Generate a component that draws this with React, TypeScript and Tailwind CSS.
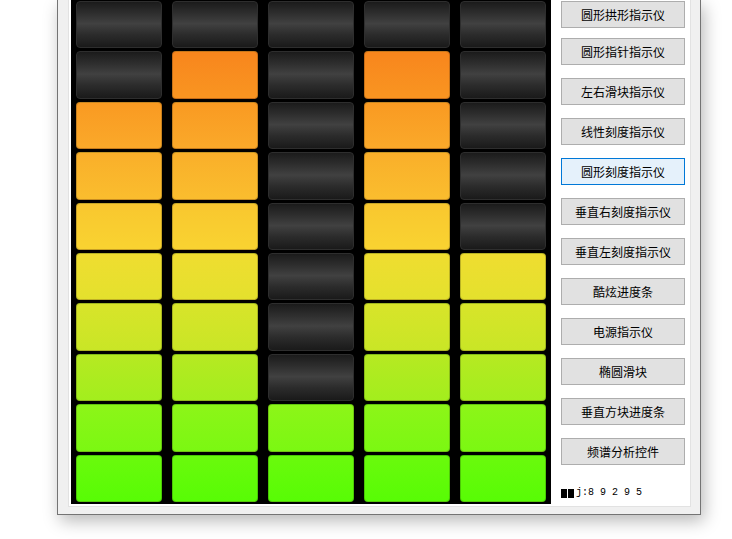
import React from 'react';

const rowColors: [string, string][] = [
  ['#f66f1a', '#f77e1c'],
  ['#f8861d', '#f99521'],
  ['#f99a22', '#faa92a'],
  ['#f9af2a', '#fabd2e'],
  ['#f9c72f', '#f9d331'],
  ['#efdd30', '#e4e12d'],
  ['#d8e42a', '#c9e626'],
  ['#b6e922', '#a3ee1d'],
  ['#8df518', '#7bf812'],
  ['#6afa0c', '#58fc05'],
];

const values = [8, 9, 2, 9, 5];

const buttons = [
  '圆形拱形指示仪',
  '圆形指针指示仪',
  '左右滑块指示仪',
  '线性刻度指示仪',
  '圆形刻度指示仪',
  '垂直右刻度指示仪',
  '垂直左刻度指示仪',
  '酷炫进度条',
  '电源指示仪',
  '椭圆滑块',
  '垂直方块进度条',
  '频谱分析控件',
];

function Cell({ row, lit }: { row: number; lit: boolean }) {
  if (!lit) {
    return (
      <div className="rounded-[4px] border border-[#2e2e2e] bg-[linear-gradient(to_bottom,#1b1b1b_0%,#2e2e2e_25%,#414141_48%,#2c2c2c_72%,#1a1a1a_100%)]" />
    );
  }
  const [top, bottom] = rowColors[row];
  return (
    <div
      className="rounded-[4px] border border-black/20"
      style={{ background: `linear-gradient(to bottom, ${top}, ${bottom})` }}
    />
  );
}

export default function App() {
  return (
    <div className="w-[732px] h-[539px] bg-white overflow-hidden" style={{ fontFamily: '"Noto Sans CJK SC", "Noto Sans", sans-serif' }}>
      <div className="ml-[57px] w-[644px] h-[515px] bg-[#f0f0f0] border-x border-b border-[#747474] px-[10px] pr-[9px] pb-[7px] shadow-[3px_6px_16px_rgba(0,0,0,0.28)]">
        <div className="h-full bg-white border-x border-b border-[#e2e2e2] pl-[2px] pb-[2px] flex">
          <div className="w-[480px] h-[504px] bg-black pl-[5px] pr-[5px] pt-[1px] pb-[2px] grid grid-cols-5 grid-rows-10 gap-x-[10px] gap-y-[3px]">
            {rowColors.map((_, r) =>
              values.map((v, c) => <Cell key={`${r}-${c}`} row={r} lit={10 - r <= v} />)
            )}
          </div>
          <div className="ml-[10px] flex flex-col">
            <div className="flex flex-col gap-[13px] pt-[1px]">
              {buttons.map((b, i) => (
                <div
                  key={b}
                  className={`w-[124px] h-[27px] flex items-center justify-center text-[12px] text-black border ${
                    i === 4 ? 'bg-[#e5f1fb] border-[#0078d7]' : 'bg-[#e1e1e1] border-[#adadad]'
                  } ${i === 0 ? 'mb-[-3px]' : ''}`}
                >
                  {b}
                </div>
              ))}
            </div>
            <div className="mt-[23px] flex items-center h-[10px]">
              <span className="inline-block w-[6px] h-[9px] bg-black" />
              <span className="inline-block w-[6px] h-[9px] bg-black ml-[1px]" />
              <span className="text-[10px] leading-none text-black ml-[2px]" style={{ fontFamily: '"Liberation Mono", monospace' }}>
                j:8 9 2 9 5
              </span>
            </div>
          </div>
        </div>
      </div>
    </div>
  );
}
